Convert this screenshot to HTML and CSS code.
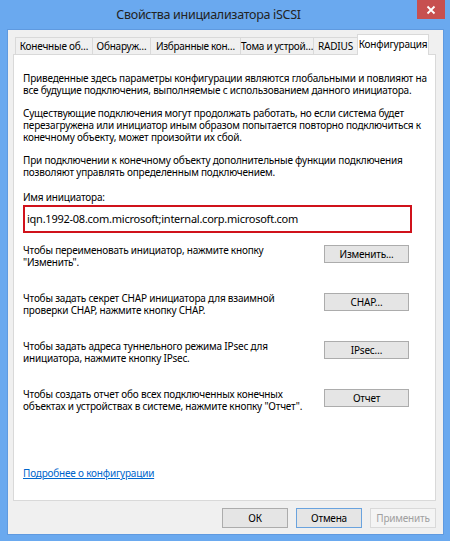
FILE: index.html
```html
<!DOCTYPE html>
<html lang="ru">
<head>
<meta charset="utf-8">
<title>Свойства инициализатора iSCSI</title>
<link rel="stylesheet" href="styles.css">
</head>
<body>
<div class="window">
  <div class="titlebar">
    <div class="title">Свойства инициализатора iSCSI</div>
    <div class="close">
      <svg width="10" height="10" viewBox="0 0 10 10"><path d="M1.5 1.5 L8.5 8.5 M8.5 1.5 L1.5 8.5" stroke="#fff" stroke-width="1.8"/></svg>
    </div>
  </div>
  <div class="client">
    <div class="tabs">
      <div class="tab t1">Конечные об…</div>
      <div class="tab t2">Обнаруж…</div>
      <div class="tab t3">Избранные кон…</div>
      <div class="tab t4">Тома и устрой…</div>
      <div class="tab t5">RADIUS</div>
      <div class="tab active">Конфигурация</div>
    </div>
    <div class="panel">
      <p class="para first">Приведенные здесь параметры конфигурации являются глобальными и повлияют на все будущие подключения, выполняемые с использованием данного инициатора.</p>
      <p class="para">Существующие подключения могут продолжать работать, но если система будет перезагружена или инициатор иным образом попытается повторно подключиться к конечному объекту, может произойти их сбой.</p>
      <p class="para">При подключении к конечному объекту дополнительные функции подключения позволяют управлять определенным подключением.</p>
      <div class="label">Имя инициатора:</div>
      <div class="input">iqn.1992-08.com.microsoft;internal.corp.microsoft.com</div>
      <div class="rows">
        <div class="row">
          <div class="rtext">Чтобы переименовать инициатор, нажмите кнопку "Изменить".</div>
          <div class="btn">Изменить...</div>
        </div>
        <div class="row">
          <div class="rtext">Чтобы задать секрет CHAP инициатора для взаимной проверки CHAP, нажмите кнопку CHAP.</div>
          <div class="btn">CHAP…</div>
        </div>
        <div class="row">
          <div class="rtext">Чтобы задать адреса туннельного режима IPsec для инициатора, нажмите кнопку IPsec.</div>
          <div class="btn">IPsec…</div>
        </div>
        <div class="row">
          <div class="rtext">Чтобы создать отчет обо всех подключенных конечных объектах и устройствах в системе, нажмите кнопку "Отчет".</div>
          <div class="btn">Отчет</div>
        </div>
      </div>
      <a class="link" href="#">Подробнее о конфигурации</a>
    </div>
    <div class="footer">
      <div class="fbtn">ОК</div>
      <div class="fbtn default">Отмена</div>
      <div class="fbtn disabled">Применить</div>
    </div>
  </div>
</div>
</body>
</html>
```

FILE: styles.css
```css
* { box-sizing: border-box; }
html, body { margin: 0; padding: 0; }
body {
  width: 450px;
  height: 541px;
  font-family: "Noto Sans", "Open Sans", sans-serif;
  font-size: 10px;
  letter-spacing: -0.2px;
  color: #000;
  overflow: hidden;
}
.window {
  width: 450px;
  height: 541px;
  background: #6aa9ef;
  padding: 0 6px 6px 7px;
  display: flex;
  flex-direction: column;
}
.titlebar {
  height: 29px;
  position: relative;
  display: flex;
  align-items: center;
  justify-content: center;
  padding-right: 34px;
  padding-bottom: 1px;
}
.title {
  font-size: 12.5px;
  letter-spacing: -0.3px;
  color: #232323;
}
.close {
  position: absolute;
  top: 0;
  right: -1px;
  width: 28px;
  height: 19px;
  background: #c75050;
  display: flex;
  align-items: center;
  justify-content: center;
}
.close svg { display: block; }
.client {
  flex: 1;
  background: #f0f0f0;
  border: 1px solid #5f9ae0;
  padding: 4px 7px 6px 5px;
  display: flex;
  flex-direction: column;
}
.tabs {
  height: 20px;
  display: flex;
  align-items: flex-end;
  padding-left: 2px;
  position: relative;
  z-index: 1;
}
.tab {
  height: 17px;
  border: 1px solid #d9d9d9;
  border-bottom: none;
  margin-right: -1px;
  background: #f0f0f0;
  display: flex;
  align-items: center;
  justify-content: center;
  white-space: nowrap;
  overflow: visible;
}
.t1 { width: 78px; }
.t2 { width: 59px; }
.t3 { width: 91px; letter-spacing: -0.3px; }
.t4 { width: 74px; letter-spacing: -0.3px; }
.t5 { width: 45px; }
.tab.active {
  width: 72px;
  height: 21px;
  margin-bottom: -1px;
  background: #fff;
  padding-bottom: 2px;
}
.panel {
  height: 447px;
  background: #fff;
  border: 1px solid #d9d9d9;
  padding: 17px 26px 21px 9px;
  display: flex;
  flex-direction: column;
}
.para {
  margin: 0 0 11px 0;
  line-height: 12px;
  width: 410px;
}
.label {
  margin-top: 2px;
  line-height: 12px;
}
.input {
  margin-top: 2px;
  width: 389px;
  height: 28px;
  border: 2px solid #d0121b;
  background: #fff;
  font-size: 11px;
  letter-spacing: -0.25px;
  line-height: 24px;
  padding-left: 2px;
  white-space: nowrap;
}
.rows {
  margin-top: 12px;
  display: flex;
  flex-direction: column;
  gap: 25px;
}
.row {
  display: flex;
  justify-content: space-between;
  align-items: flex-start;
}
.rtext {
  width: 288px;
  line-height: 12px;
  margin-top: -1px;
}
.btn {
  width: 85px;
  height: 18px;
  background: #e5e5e5;
  border: 1px solid #acacac;
  display: flex;
  align-items: center;
  justify-content: center;
}
.link {
  margin-top: auto;
  color: #0066cc;
  text-decoration: underline;
  line-height: 12px;
  align-self: flex-start;
}
.footer {
  margin-top: 7px;
  display: flex;
  justify-content: flex-end;
  gap: 8px;
}
.fbtn {
  width: 66px;
  height: 20px;
  background: #e5e5e5;
  border: 1px solid #acacac;
  display: flex;
  align-items: center;
  justify-content: center;
}
.fbtn.default { border-color: #6aa3de; }
.fbtn.disabled {
  background: #f4f4f4;
  border-color: #d9d9d9;
  color: #a0a0a0;
}
```
